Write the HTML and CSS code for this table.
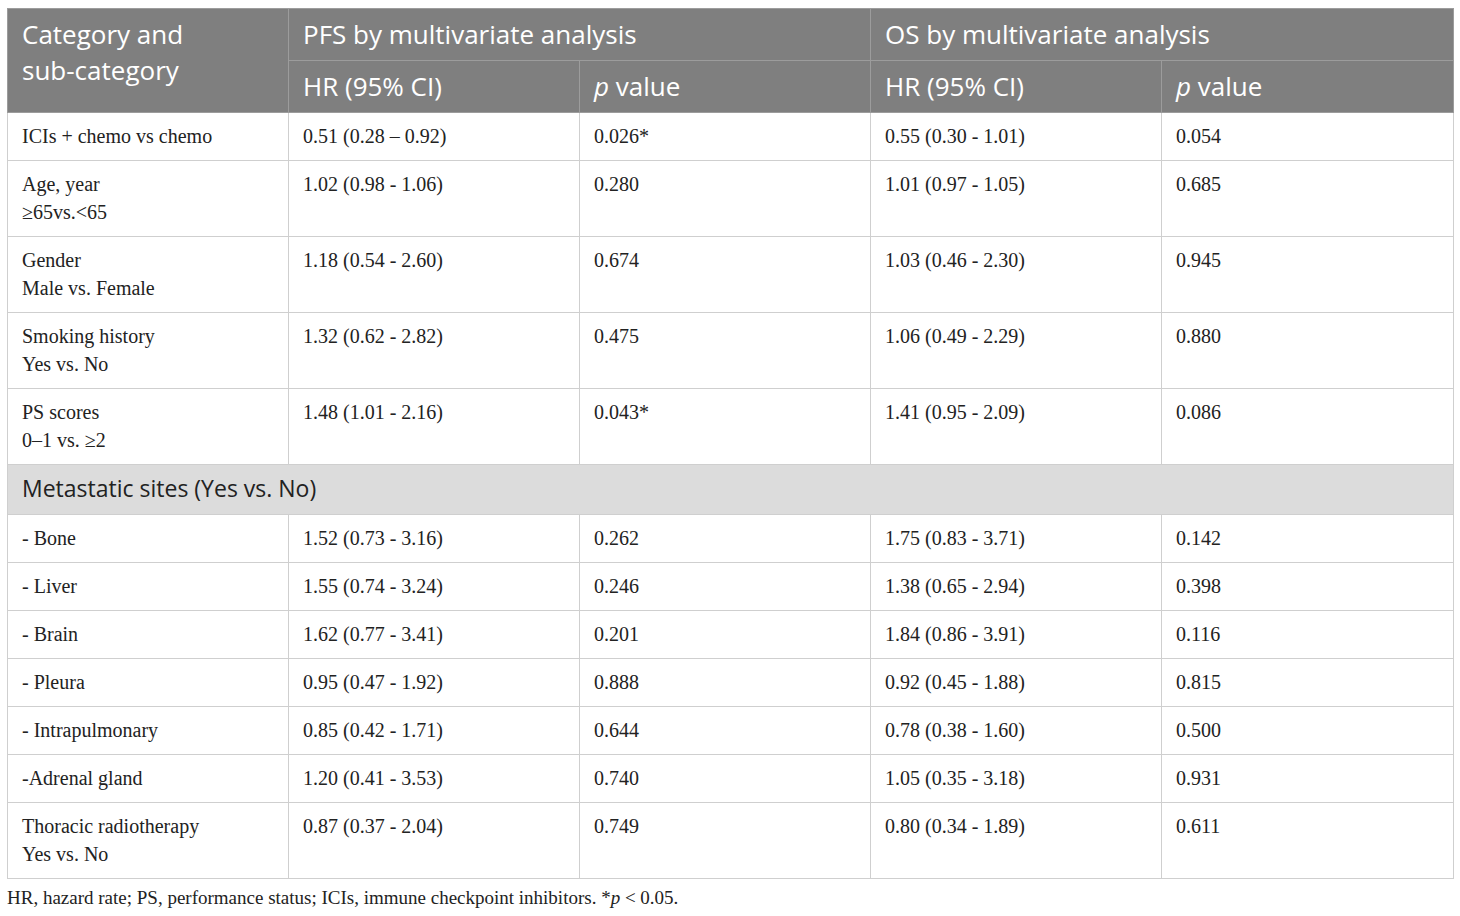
FILE: index.html
```html
<!DOCTYPE html>
<html>
<head>
  <link rel="stylesheet" href="styles.css">
</head>
<body>
  <table class="results">
    <colgroup>
      <col class="col-cat">
      <col class="col-num">
      <col class="col-num">
      <col class="col-num">
      <col class="col-last">
    </colgroup>
    <thead>
      <tr>
        <th rowspan="2" class="cat-head">Category and<br>sub-category</th>
        <th colspan="2">PFS by multivariate analysis</th>
        <th colspan="2">OS by multivariate analysis</th>
      </tr>
      <tr>
        <th>HR (95% CI)</th>
        <th><i>p</i> value</th>
        <th>HR (95% CI)</th>
        <th><i>p</i> value</th>
      </tr>
    </thead>
    <tbody>
      <tr>
        <td>ICIs + chemo vs chemo</td>
        <td>0.51 (0.28 – 0.92)</td>
        <td>0.026*</td>
        <td>0.55 (0.30 - 1.01)</td>
        <td>0.054</td>
      </tr>
      <tr>
        <td>Age, year<br>≥65vs.&lt;65</td>
        <td>1.02 (0.98 - 1.06)</td>
        <td>0.280</td>
        <td>1.01 (0.97 - 1.05)</td>
        <td>0.685</td>
      </tr>
      <tr>
        <td>Gender<br>Male vs. Female</td>
        <td>1.18 (0.54 - 2.60)</td>
        <td>0.674</td>
        <td>1.03 (0.46 - 2.30)</td>
        <td>0.945</td>
      </tr>
      <tr>
        <td>Smoking history<br>Yes vs. No</td>
        <td>1.32 (0.62 - 2.82)</td>
        <td>0.475</td>
        <td>1.06 (0.49 - 2.29)</td>
        <td>0.880</td>
      </tr>
      <tr>
        <td>PS scores<br>0–1 vs. ≥2</td>
        <td>1.48 (1.01 - 2.16)</td>
        <td>0.043*</td>
        <td>1.41 (0.95 - 2.09)</td>
        <td>0.086</td>
      </tr>
      <tr class="group-row">
        <td colspan="5">Metastatic sites (Yes vs. No)</td>
      </tr>
      <tr>
        <td>- Bone</td>
        <td>1.52 (0.73 - 3.16)</td>
        <td>0.262</td>
        <td>1.75 (0.83 - 3.71)</td>
        <td>0.142</td>
      </tr>
      <tr>
        <td>- Liver</td>
        <td>1.55 (0.74 - 3.24)</td>
        <td>0.246</td>
        <td>1.38 (0.65 - 2.94)</td>
        <td>0.398</td>
      </tr>
      <tr>
        <td>- Brain</td>
        <td>1.62 (0.77 - 3.41)</td>
        <td>0.201</td>
        <td>1.84 (0.86 - 3.91)</td>
        <td>0.116</td>
      </tr>
      <tr>
        <td>- Pleura</td>
        <td>0.95 (0.47 - 1.92)</td>
        <td>0.888</td>
        <td>0.92 (0.45 - 1.88)</td>
        <td>0.815</td>
      </tr>
      <tr>
        <td>- Intrapulmonary</td>
        <td>0.85 (0.42 - 1.71)</td>
        <td>0.644</td>
        <td>0.78 (0.38 - 1.60)</td>
        <td>0.500</td>
      </tr>
      <tr>
        <td>-Adrenal gland</td>
        <td>1.20 (0.41 - 3.53)</td>
        <td>0.740</td>
        <td>1.05 (0.35 - 3.18)</td>
        <td>0.931</td>
      </tr>
      <tr>
        <td>Thoracic radiotherapy<br>Yes vs. No</td>
        <td>0.87 (0.37 - 2.04)</td>
        <td>0.749</td>
        <td>0.80 (0.34 - 1.89)</td>
        <td>0.611</td>
      </tr>
    </tbody>
  </table>
  <p class="footnote">HR, hazard rate; PS, performance status; ICIs, immune checkpoint inhibitors. *<i>p</i> &lt; 0.05.</p>
</body>
</html>
```

FILE: styles.css
```css
body {
  margin: 0;
  padding: 8px 7px;
  background: #fff;
  font-family: "Liberation Serif", "Times New Roman", serif;
  color: #222;
}

.results {
  width: 1447px;
  table-layout: fixed;
  border-collapse: collapse;
}

.col-cat { width: 281px; }
.col-num { width: 291px; }
.col-last { width: 292px; }

th {
  background: #7f7f7f;
  color: #fff;
  font-family: "Open Sans", "Noto Sans", sans-serif;
  font-weight: 400;
  font-size: 26px;
  line-height: 30px;
  text-align: left;
  vertical-align: top;
  padding: 10px 14px 11px;
  border: 1px solid #9c9c9c;
}

th.cat-head {
  line-height: 36px;
  padding-top: 7px;
}

th i {
  font-style: italic;
}

td {
  font-size: 20px;
  line-height: 28px;
  vertical-align: top;
  padding: 9px 14px 10px;
  border: 1px solid #cfcfcf;
}

.group-row td {
  background: #dcdcdc;
  font-family: "Open Sans", "Noto Sans", sans-serif;
  font-size: 23px;
  line-height: 29px;
  padding: 9px 14px 11px;
  color: #222;
}

.footnote {
  margin: 8px 0 0;
  font-size: 19px;
  line-height: 22px;
  color: #222;
}
```
